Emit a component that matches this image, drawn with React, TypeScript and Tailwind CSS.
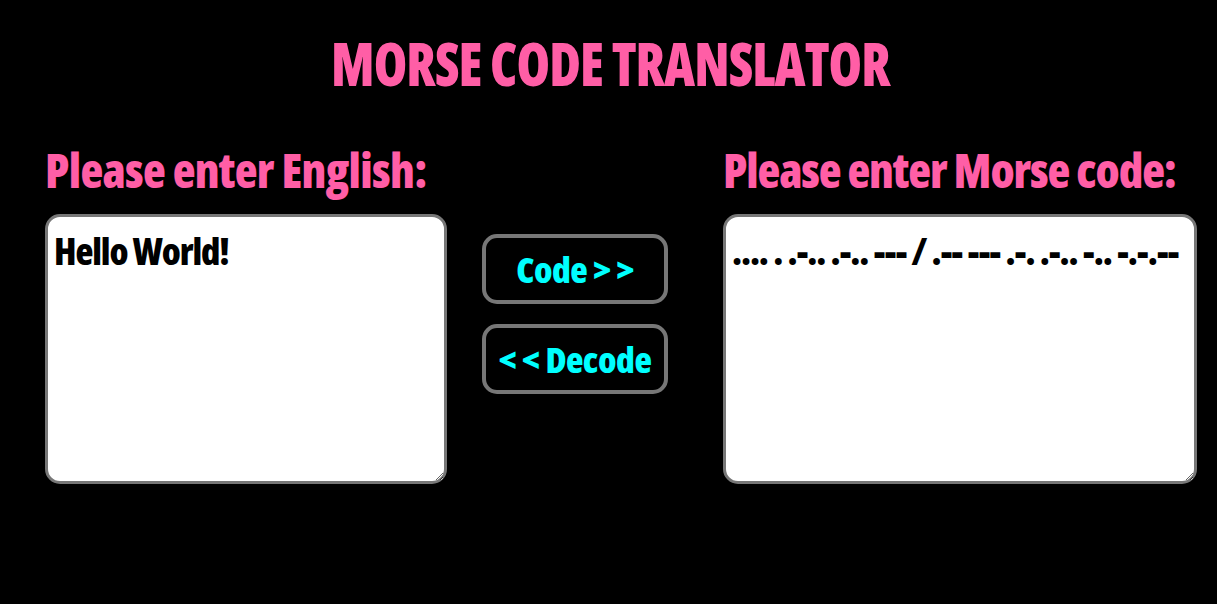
const condensed = "font-['Open_Sans','Noto_Sans',sans-serif] font-extrabold font-stretch-[62%]";

function Column({ label, value, width, labelTrack, textTrack }: { label: string; value: string; width: string; labelTrack: string; textTrack: string }) {
  return (
    <div className={`flex flex-col ${width}`}>
      <h2 className={`text-[47px] leading-[50px] text-[#ff5ea6] whitespace-nowrap ${labelTrack} ${condensed}`}>{label}</h2>
      <textarea
        defaultValue={value}
        spellCheck={false}
        className={`mt-[19px] h-[270px] w-full rounded-[15px] border-[3px] border-[#777] bg-white px-[6px] py-[12px] text-[37px] leading-[44px] text-black outline-none ${textTrack} ${condensed}`}
      />
    </div>
  );
}

function Arrow({ children }: { children: string }) {
  return (
    <button className={`flex h-[70px] w-[186px] items-center justify-center rounded-[15px] border-[4px] border-[#777] bg-black pt-[2px] text-[36px] tracking-[-0.5px] text-[#00ffff] ${condensed}`}>
      {children}
    </button>
  );
}

export default function App() {
  return (
    <div className="h-[604px] w-[1217px] overflow-hidden bg-black">
      <h1 className={`pl-[4px] pt-[23px] text-center text-[60px] leading-[80px] tracking-[-1px] text-[#ff5ea6] ${condensed}`}>
        <span className="inline-block scale-x-[0.9]">MORSE CODE TRANSLATOR</span>
      </h1>
      <div className="mt-[42px] flex pl-[45px]">
        <Column label="Please enter English:" value="Hello World!" width="w-[402px]" labelTrack="tracking-[-0.65px]" textTrack="tracking-[-1.1px]" />
        <div className="ml-[35px] flex flex-col gap-[20px] pt-[89px]">
          <Arrow>{"Code > >"}</Arrow>
          <Arrow>{"< < Decode"}</Arrow>
        </div>
        <div className="ml-[55px]">
          <Column label="Please enter Morse code:" value=".... . .-.. .-.. --- / .-- --- .-. .-.. -.. -.-.--" width="w-[474px]" labelTrack="tracking-[-1.1px]" textTrack="tracking-[-1.15px]" />
        </div>
      </div>
    </div>
  );
}
